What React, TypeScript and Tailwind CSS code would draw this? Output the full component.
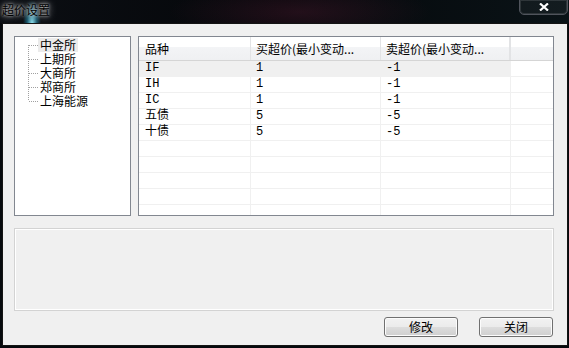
import React from "react";

const exchanges = ["中金所", "上期所", "大商所", "郑商所", "上海能源"];

const rows: [string, string, string][] = [
  ["IF", "1", "-1"],
  ["IH", "1", "-1"],
  ["IC", "1", "-1"],
  ["五债", "5", "-5"],
  ["十债", "5", "-5"],
  ["", "", ""],
  ["", "", ""],
  ["", "", ""],
  ["", "", ""],
  ["", "", ""],
];

function TreeLines() {
  const ys = [7, 21, 35, 49, 63];
  return (
    <svg width="10" height="70" className="shrink-0">
      <line x1="0.5" y1="7" x2="0.5" y2="63" stroke="#a0a0a0" strokeDasharray="1 1" />
      {ys.map((y) => (
        <line key={y} x1="1" y1={y + 0.5} x2="10" y2={y + 0.5} stroke="#a0a0a0" strokeDasharray="1 1" />
      ))}
    </svg>
  );
}

function Button({ label }: { label: string }) {
  return (
    <button className="w-[74px] h-[20px] rounded-[3px] border border-[#707070] bg-[linear-gradient(#f2f2f2_0%,#ebebeb_50%,#dddddd_51%,#cfcfcf_100%)] shadow-[inset_0_0_0_1px_#fcfcfc] text-[12px] leading-[18px] text-black">
      {label}
    </button>
  );
}

export default function App() {
  return (
    <div className="w-[569px] h-[348px] overflow-hidden bg-[#06090d] flex flex-col font-['Noto_Sans_CJK_SC',sans-serif] text-[12px] text-black">
      {/* title bar */}
      <div className="h-[23px] shrink-0 flex justify-between bg-[radial-gradient(ellipse_9px_24px_at_32px_24px,rgba(150,240,255,0.95),rgba(40,170,210,0.45)_55%,transparent_100%),radial-gradient(ellipse_130px_30px_at_300px_12px,rgba(90,30,55,0.35),transparent),linear-gradient(90deg,#0b0e13,#05070a_50%,#0a1317)]">
        <div className="pl-[2px] pt-[2px] leading-[16px] text-[12px] text-black [text-shadow:0_0_3px_rgba(255,255,255,0.8),0_0_7px_rgba(255,255,255,0.55),0_0_12px_rgba(255,255,255,0.3)]">
          超价设置
        </div>
        <div className="w-[49px] h-[16px] mr-[1px] -mt-px rounded-b-[5px] border border-[#50545c] shadow-[inset_0_0_0_1px_rgba(255,255,255,0.12)] bg-[rgba(255,255,255,0.04)] flex items-center justify-center">
          <svg width="10" height="8" viewBox="0 0 10 8">
            <path d="M1 0.5 L9 7.5 M9 0.5 L1 7.5" stroke="#ffffff" strokeWidth="2.2" />
          </svg>
        </div>
      </div>

      {/* window body */}
      <div className="ml-[2px] mr-[1px] mb-[2px] h-[323px] border border-[#141414] bg-[#f0f0f0] pl-[11px] pt-[12px]">
        <div className="flex gap-[7px] h-[180px]">
          {/* tree */}
          <div className="w-[117px] border border-[#828790] bg-white pl-[13px] pt-[1px] flex">
            <TreeLines />
            <div className="flex flex-col">
              {exchanges.map((name, i) => (
                <div
                  key={name}
                  className={
                    i === 0
                      ? "h-[14px] leading-[14px] px-[2px] bg-[#ebebeb] self-start"
                      : "h-[14px] leading-[14px] px-[2px] self-start"
                  }
                >
                  {name}
                </div>
              ))}
            </div>
          </div>

          {/* list */}
          <div className="w-[416px] border border-[#828790] bg-white overflow-hidden">
            <div className="flex h-[24px] border-b border-[#d5d5d5] bg-[linear-gradient(#ffffff_0%,#ffffff_42%,#f3f4f6_43%,#eff0f2_100%)] leading-[23px]">
              <div className="w-[112px] pl-[6px] border-r border-[#e2e3e5]">品种</div>
              <div className="w-[130px] pl-[5px] border-r border-[#e2e3e5]">买超价(最小变动...</div>
              <div className="w-[130px] pl-[5px] border-r-2 border-[#e2e3e5]">卖超价(最小变动...</div>
              <div className="flex-1" />
            </div>
            {rows.map((r, i) => (
              <div key={i} className="flex h-[16px] border-b border-[#f0f0f0] font-['Liberation_Mono','Noto_Sans_CJK_SC',monospace] leading-[15px]">
                <div className={i === 0 ? "w-[112px] pl-[6px] border-r border-[#f0f0f0] bg-[#f0f0f0]" : "w-[112px] pl-[6px] border-r border-[#f0f0f0]"}>
                  {r[0]}
                </div>
                <div className={i === 0 ? "w-[130px] pl-[5px] border-r border-[#f0f0f0] bg-[#f0f0f0]" : "w-[130px] pl-[5px] border-r border-[#f0f0f0]"}>
                  {r[1]}
                </div>
                <div className={i === 0 ? "w-[130px] pl-[5px] border-r border-[#f0f0f0] bg-[#f0f0f0]" : "w-[130px] pl-[5px] border-r border-[#f0f0f0]"}>
                  {r[2]}
                </div>
                <div className="flex-1" />
              </div>
            ))}
          </div>
        </div>

        {/* info panel */}
        <div className="mt-[12px] w-[540px] h-[83px] border border-[#d3d3d3] shadow-[inset_0_0_0_1px_#ffffff] bg-[#f0f0f0]" />

        {/* buttons */}
        <div className="mt-[6px] w-[540px] pr-[1px] flex justify-end gap-[21px]">
          <Button label="修改" />
          <Button label="关闭" />
        </div>
      </div>
    </div>
  );
}
